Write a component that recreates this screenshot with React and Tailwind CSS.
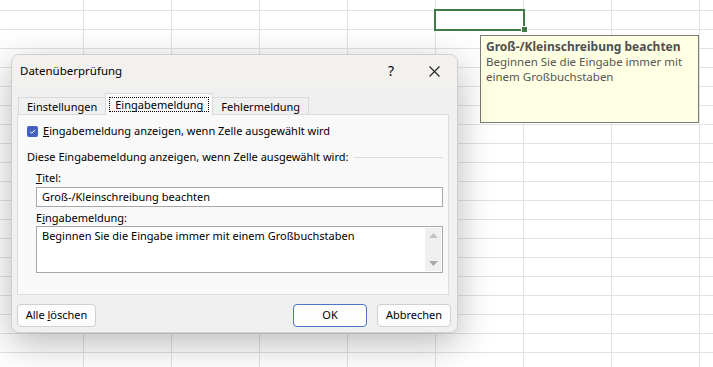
import React from 'react';

const font = { fontFamily: '"Noto Sans", "Liberation Sans", sans-serif' };

const Tab = ({ label, active }) => {
    if (active) {
        return (
            <div className="relative z-10 -mb-px -mx-px h-[22px] self-end bg-[#f9f9f9] border border-b-0 border-[#d9d9d9] px-[3px] pt-[3px]">
                <div className="border border-dotted border-black px-[5px] leading-[13px] h-[15px]">{label}</div>
            </div>
        );
    }
    return (
        <div className="h-[17px] self-end border border-b-0 border-[#d9d9d9] bg-[#f0f0f0] px-[8px] leading-[17px]">
            {label}
        </div>
    );
};

const Btn = ({ children, primary, className = '' }) => (
    <button
        className={`h-[23px] rounded-[4px] bg-[#fdfdfd] text-[11px] text-black ${primary ? 'border border-[#4a73c9]' : 'border border-[#d0d0d0]'} ${className}`}
    >
        {children}
    </button>
);

const App = () => {
    return (
        <div
            className="relative w-[713px] h-[367px] overflow-hidden bg-white bg-[linear-gradient(to_right,#e2e2e2_1px,transparent_1px),linear-gradient(to_bottom,#e2e2e2_1px,transparent_1px)] bg-[size:88px_19px] bg-[position:83px_10px] text-[11px] text-black"
            style={font}
        >
            {/* selected cell */}
            <div className="absolute left-[434px] top-[9px] w-[91px] h-[22px] border-2 border-[#3f7a47]" />
            <div className="absolute left-[521px] top-[26px] w-[7px] h-[7px] bg-[#3f7a47] border border-white" />

            {/* input message tooltip */}
            <div className="absolute left-[480px] top-[35px] w-[219px] h-[88px] bg-[#ffffe3] border border-[#7a7a7a] px-[5px] pt-[3px] leading-[15px] text-[#555]">
                <div className="font-bold text-[12px] text-[#505050]">Groß-/Kleinschreibung beachten</div>
                <div className="text-[11.5px]">Beginnen Sie die Eingabe immer mit</div>
                <div className="text-[11.5px]">einem Großbuchstaben</div>
            </div>

            {/* dialog */}
            <div className="absolute left-[11px] top-[54px] w-[447px] h-[279px] rounded-[8px] bg-[#f0f0f0] border border-[#cfcfcf] shadow-[0_10px_36px_rgba(0,0,0,0.28)] flex flex-col overflow-hidden">
                <div className="h-[31px] shrink-0 bg-[#f3f1ee] flex items-center pl-[8px] pr-[17px]">
                    <span className="text-[11.5px] pt-[1px]">Datenüberprüfung</span>
                    <span className="ml-auto mr-[35px] text-[14px]">?</span>
                    <svg width="11" height="11" viewBox="0 0 11 11" className="mt-[1px]">
                        <path d="M0.5 0.5 L10.5 10.5 M10.5 0.5 L0.5 10.5" stroke="#222" strokeWidth="1.1" />
                    </svg>
                </div>

                <div className="flex flex-col px-[5px] pt-[6px]">
                    <div className="flex items-end h-[22px] pl-[1px]">
                        <Tab label="Einstellungen" />
                        <Tab label="Eingabemeldung" active />
                        <Tab label="Fehlermeldung" />
                    </div>
                    <div className="h-[181px] mr-[3px] bg-[#f9f9f9] border border-[#dcdcdc] px-[9px] pt-[9px]">
                        <div className="flex items-center h-[14px]">
                            <div className="w-[11px] h-[11px] rounded-[2px] bg-[#4460c4] flex items-center justify-center">
                                <svg width="9" height="9" viewBox="0 0 9 9">
                                    <path d="M2 4.6 L3.8 6.3 L7 2.8" stroke="#fff" strokeWidth="1" fill="none" />
                                </svg>
                            </div>
                            <span className="ml-[5px]"><span className="underline">E</span>ingabemeldung anzeigen, wenn Zelle ausgewählt wird</span>
                        </div>
                        <div className="flex items-center mt-[12px] h-[15px]">
                            <span>Diese Eingabemeldung anzeigen, wenn Zelle ausgewählt wird:</span>
                            <div className="flex-1 h-px bg-[#dcdcdc] ml-[6px] mr-[-4px]" />
                        </div>
                        <div className="pl-[9px] mr-[-4px]">
                            <div className="mt-[5px] h-[15px] leading-[15px]"><span className="underline">T</span>itel:</div>
                            <div className="mt-[2px] h-[20px] bg-white border border-[#a8a8a8] pl-[5px] leading-[18px]">Groß-/Kleinschreibung beachten</div>
                            <div className="mt-[3px] h-[15px] leading-[15px]">E<span className="underline">i</span>ngabemeldung:</div>
                            <div className="mt-[1px] h-[47px] bg-white border border-[#a8a8a8] pl-[5px] flex">
                                <div className="flex-1 leading-[16px] pt-[1px]">Beginnen Sie die Eingabe immer mit einem Großbuchstaben</div>
                                <div className="w-[16px] my-[1px] mr-[1px] bg-[#f0f0f0] flex flex-col items-center justify-between py-[5px]">
                                    <svg width="9" height="5" viewBox="0 0 9 5"><path d="M0 5 L4.5 0 L9 5 Z" fill="#c4c4c4" /></svg>
                                    <svg width="9" height="5" viewBox="0 0 9 5"><path d="M0 0 L4.5 5 L9 0 Z" fill="#a8a8a8" /></svg>
                                </div>
                            </div>
                        </div>
                    </div>
                    <div className="flex items-center mt-[9px] pr-[1px]">
                        <Btn className="w-[79px]">Alle <span className="underline">l</span>öschen</Btn>
                        <Btn primary className="w-[74px] ml-auto">OK</Btn>
                        <Btn className="w-[74px] ml-[10px]">Abbrechen</Btn>
                    </div>
                </div>
            </div>
        </div>
    );
};

export default App;
